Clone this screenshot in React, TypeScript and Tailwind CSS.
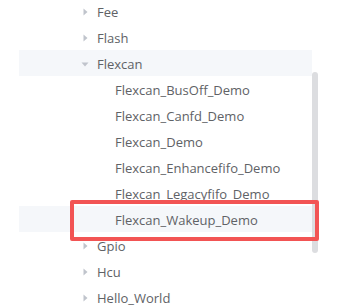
import React from "react";

type Node = { label: string; level: number; kind: "collapsed" | "expanded" | "leaf"; active?: boolean };

const nodes: Node[] = [
  { label: "Fee", level: 3, kind: "collapsed" },
  { label: "Flash", level: 3, kind: "collapsed" },
  { label: "Flexcan", level: 3, kind: "expanded", active: true },
  { label: "Flexcan_BusOff_Demo", level: 4, kind: "leaf" },
  { label: "Flexcan_Canfd_Demo", level: 4, kind: "leaf" },
  { label: "Flexcan_Demo", level: 4, kind: "leaf" },
  { label: "Flexcan_Enhancefifo_Demo", level: 4, kind: "leaf" },
  { label: "Flexcan_Legacyfifo_Demo", level: 4, kind: "leaf" },
  { label: "Flexcan_Wakeup_Demo", level: 4, kind: "leaf", active: true },
  { label: "Gpio", level: 3, kind: "collapsed" },
  { label: "Hcu", level: 3, kind: "collapsed" },
  { label: "Hello_World", level: 3, kind: "collapsed" },
];

function Caret({ kind }: { kind: Node["kind"] }) {
  if (kind === "leaf") return <span className="w-6 shrink-0" />;
  return (
    <span className="flex w-6 shrink-0 items-center justify-center pt-[2px]">
      <svg
        width="12"
        height="12"
        viewBox="0 0 12 12"
        className={kind === "expanded" ? "rotate-90" : ""}
      >
        <path d="M4.5 2.5 L8.5 6 L4.5 9.5 Z" fill="#c0c4cc" />
      </svg>
    </span>
  );
}

function TreeRow({ node }: { node: Node }) {
  return (
    <div
      className={`flex h-[26px] items-center ${node.active ? "bg-[#f5f7fa]" : ""}`}
      style={{ paddingLeft: node.level * 18 }}
    >
      <Caret kind={node.kind} />
      <span className="pt-[3px] text-[13px] text-[#606266]">{node.label}</span>
    </div>
  );
}

export default function App() {
  return (
    <div className="relative h-[307px] w-[342px] overflow-hidden bg-white font-['Open_Sans',sans-serif]">
      <div className="flex">
        <div className="ml-[19px] -mt-[2px] w-[293px]">
          {nodes.map((node, i) => (
            <TreeRow key={i} node={node} />
          ))}
        </div>
        <div className="w-[6px] pt-[72px]">
          <div className="h-[181px] rounded-full bg-[#dcdde0]" />
        </div>
      </div>
      <div className="absolute left-[70px] top-[200px] h-[41px] w-[249px] rounded-[2px] border-4 border-[#f25454]" />
    </div>
  );
}
